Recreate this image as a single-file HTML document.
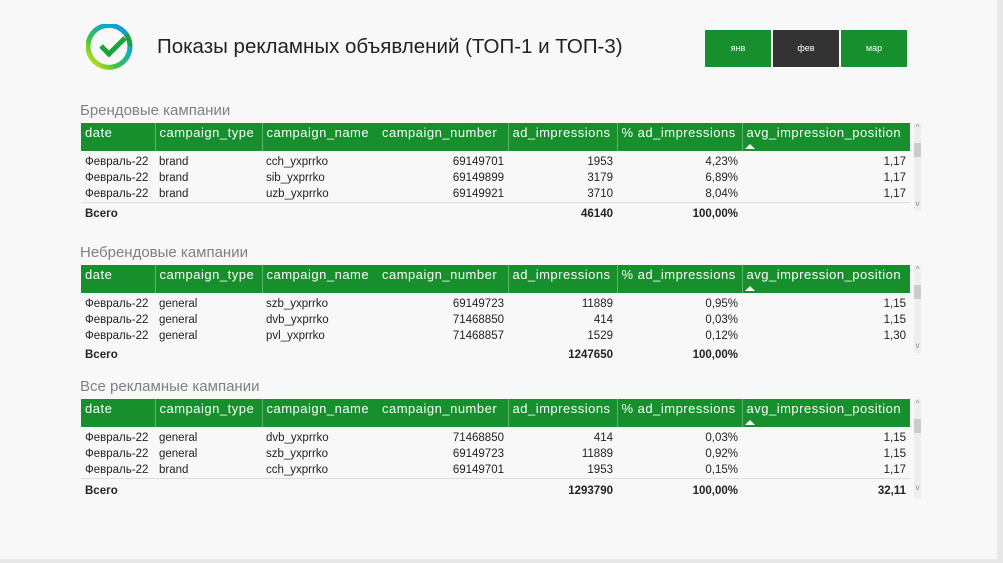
<!DOCTYPE html>
<html><head><meta charset="utf-8"><style>
body{margin:0;width:1003px;height:563px;background:#e8e8e8;font-family:"Liberation Sans","DejaVu Sans",sans-serif;overflow:hidden;position:relative}
.page{position:absolute;left:0;top:0;width:997px;height:559px;background:#f8f8f8}
.title{position:absolute;left:157px;top:35px;font-size:20.5px;color:#222}
.btn{position:absolute;top:30px;width:66px;height:37px;background:#168f2c;color:#fff;font-size:9px;text-align:center;line-height:37px}
.sec{position:absolute;left:80px;font-size:15px;color:#808080}
table{position:absolute;left:81px;border-collapse:collapse;table-layout:fixed;width:829px;font-size:11.5px;color:#222}
th{background:#168f2c;color:#fff;font-weight:normal;font-size:13px;letter-spacing:0.5px;text-align:left;height:28px;padding:0 4px;vertical-align:top;line-height:20px;white-space:nowrap;overflow:hidden;border-left:1px solid #5fb56f}
th:first-child{border-left:none}
td{height:16px;padding:0 4px;white-space:nowrap;line-height:16px}
td.r{text-align:right}
tr.f td{padding-top:3px}
tr.t td{font-weight:bold;border-top:1px solid #ddd;height:18px;padding-top:2px}
.tri{position:absolute;width:0;height:0;border-left:5px solid transparent;border-right:5px solid transparent;border-bottom:5px solid #fff}
.sb{position:absolute;left:914px;width:7px;background:#eee}
.sb i{position:absolute;left:0;top:20px;width:7px;height:14px;background:#ccc}
.sb b{position:absolute;left:0;width:7px;font-size:8px;color:#888;font-weight:normal;text-align:center}
</style></head><body><div class="page">
<svg style="position:absolute;left:86px;top:24px" width="48" height="48" viewBox="0 0 48 48">
<defs><linearGradient id="g" x1="0" y1="1" x2="1" y2="0"><stop offset="0" stop-color="#f2e600"/><stop offset="0.35" stop-color="#3cc24a"/><stop offset="0.7" stop-color="#11a9c8"/><stop offset="1" stop-color="#1b8fe0"/></linearGradient></defs>
<path d="M40 10 A21 21 0 1 0 44 22" fill="none" stroke="url(#g)" stroke-width="5"/>
<path d="M40 10 A21 21 0 0 1 44 22" fill="none" stroke="#1aa33a" stroke-width="5"/>
<path d="M15 22 L23 30 L39 14" fill="none" stroke="#1aa33a" stroke-width="5" stroke-linejoin="miter"/>
</svg>
<div class="title">Показы рекламных объявлений (ТОП-1 и ТОП-3)</div>
<div class="btn" style="left:705px">янв</div>
<div class="btn" style="left:773px;background:#333">фев</div>
<div class="btn" style="left:841px">мар</div>

<div class="sec" style="top:102px">Брендовые кампании</div>
<table style="top:123px"><colgroup><col style="width:74px"><col style="width:107px"><col style="width:116px"><col style="width:130px"><col style="width:109px"><col style="width:125px"><col style="width:168px"></colgroup>
<tr><th>date</th><th>campaign_type</th><th>campaign_name</th><th style="border-left:none">campaign_number</th><th>ad_impressions</th><th>% ad_impressions</th><th>avg_impression_position</th></tr>
<tr class="f"><td>Февраль-22</td><td>brand</td><td>cch_yxprrko</td><td class="r">69149701</td><td class="r">1953</td><td class="r">4,23%</td><td class="r">1,17</td></tr>
<tr><td>Февраль-22</td><td>brand</td><td>sib_yxprrko</td><td class="r">69149899</td><td class="r">3179</td><td class="r">6,89%</td><td class="r">1,17</td></tr>
<tr><td>Февраль-22</td><td>brand</td><td>uzb_yxprrko</td><td class="r">69149921</td><td class="r">3710</td><td class="r">8,04%</td><td class="r">1,17</td></tr>
<tr class="t"><td>Всего</td><td></td><td></td><td></td><td class="r">46140</td><td class="r">100,00%</td><td></td></tr>
</table>
<div class="tri" style="left:745px;top:144px"></div>
<div class="sb" style="top:123px;height:88px"><b style="top:0">^</b><i></i><b style="top:76px">v</b></div>

<div class="sec" style="top:244px">Небрендовые кампании</div>
<table style="top:265px"><colgroup><col style="width:74px"><col style="width:107px"><col style="width:116px"><col style="width:130px"><col style="width:109px"><col style="width:125px"><col style="width:168px"></colgroup>
<tr><th>date</th><th>campaign_type</th><th>campaign_name</th><th style="border-left:none">campaign_number</th><th>ad_impressions</th><th>% ad_impressions</th><th>avg_impression_position</th></tr>
<tr class="f"><td>Февраль-22</td><td>general</td><td>szb_yxprrko</td><td class="r">69149723</td><td class="r">11889</td><td class="r">0,95%</td><td class="r">1,15</td></tr>
<tr><td>Февраль-22</td><td>general</td><td>dvb_yxprrko</td><td class="r">71468850</td><td class="r">414</td><td class="r">0,03%</td><td class="r">1,15</td></tr>
<tr><td>Февраль-22</td><td>general</td><td>pvl_yxprrko</td><td class="r">71468857</td><td class="r">1529</td><td class="r">0,12%</td><td class="r">1,30</td></tr>
<tr class="t"><td style="border-top:none">Всего</td><td style="border-top:none"></td><td style="border-top:none"></td><td style="border-top:none"></td><td class="r" style="border-top:none">1247650</td><td class="r" style="border-top:none">100,00%</td><td style="border-top:none"></td></tr>
</table>
<div class="tri" style="left:745px;top:286px"></div>
<div class="sb" style="top:265px;height:88px"><b style="top:0">^</b><i></i><b style="top:76px">v</b></div>

<div class="sec" style="top:378px">Все рекламные кампании</div>
<table style="top:399px"><colgroup><col style="width:74px"><col style="width:107px"><col style="width:116px"><col style="width:130px"><col style="width:109px"><col style="width:125px"><col style="width:168px"></colgroup>
<tr><th>date</th><th>campaign_type</th><th>campaign_name</th><th style="border-left:none">campaign_number</th><th>ad_impressions</th><th>% ad_impressions</th><th>avg_impression_position</th></tr>
<tr class="f"><td>Февраль-22</td><td>general</td><td>dvb_yxprrko</td><td class="r">71468850</td><td class="r">414</td><td class="r">0,03%</td><td class="r">1,15</td></tr>
<tr><td>Февраль-22</td><td>general</td><td>szb_yxprrko</td><td class="r">69149723</td><td class="r">11889</td><td class="r">0,92%</td><td class="r">1,15</td></tr>
<tr><td>Февраль-22</td><td>brand</td><td>cch_yxprrko</td><td class="r">69149701</td><td class="r">1953</td><td class="r">0,15%</td><td class="r">1,17</td></tr>
<tr class="t"><td style="padding-top:3px">Всего</td><td></td><td></td><td></td><td class="r" style="padding-top:3px">1293790</td><td class="r" style="padding-top:3px">100,00%</td><td class="r" style="padding-top:3px">32,11</td></tr>
</table>
<div class="tri" style="left:745px;top:420px"></div>
<div class="sb" style="top:399px;height:100px"><b style="top:0">^</b><i></i><b style="top:84px">v</b></div>
</div></body></html>
